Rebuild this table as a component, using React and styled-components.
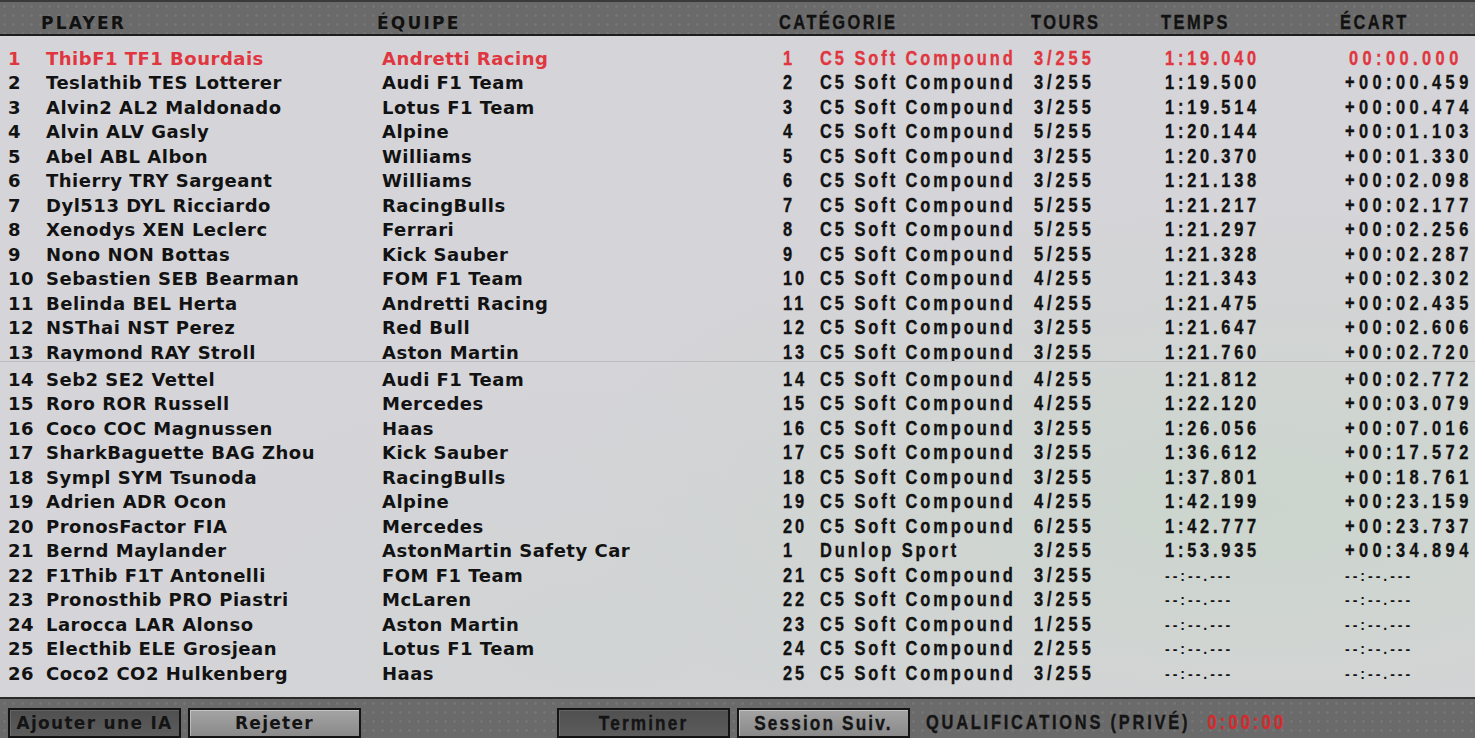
import React from "react";
import styled, { createGlobalStyle, css } from "styled-components";

const GlobalStyle = createGlobalStyle`
  html, body {
    margin: 0;
    padding: 0;
    background: #d6d5d9;
  }
  body {
    font-family: "DejaVu Sans", "Liberation Sans", sans-serif;
    overflow: hidden;
  }
`;

// wide bold face used for names and teams
const wide = css`
  font-family: "DejaVu Sans", "Liberation Sans", sans-serif;
  font-weight: 700;
  font-size: 18px;
  letter-spacing: 0.5px;
`;

// the game's narrow face: no condensed font installed, so squeeze Liberation Sans
const narrowFace = css`
  font-family: "Liberation Sans", Arial, sans-serif;
  font-weight: 700;
  font-size: 20px;
  -webkit-text-stroke: 0.35px currentColor;
  white-space: nowrap;
`;

const narrow = css`
  ${narrowFace};
  display: inline-block;
  letter-spacing: 3.6px;
  transform: scaleX(0.82);
  transform-origin: left center;
`;

const dots = css`
  background-color: #6a6a6a;
  background-image: radial-gradient(rgba(255, 255, 255, 0.07) 1px, transparent 1.6px);
  background-size: 9px 9px;
`;

const Screen = styled.div`
  width: 1475px;
  height: 738px;
  display: flex;
  flex-direction: column;
  overflow: hidden;
`;

const HeaderBar = styled.div`
  ${dots};
  height: 32px;
  border-top: 2px solid #3a3a3a;
  border-bottom: 2px solid #1e1e1e;
  padding-left: 41px;
  display: grid;
  grid-template-columns: 336px 402px 252px 130px 179px 1fr;
  align-items: center;
  color: #111;
`;

const HeadWide = styled.div`
  ${wide};
  font-size: 17px;
  letter-spacing: 2.2px;
  padding-top: 9px;
`;

const HeadNarrow = styled.div`
  padding-top: 9px;
  & > span {
    ${narrow};
    letter-spacing: 3px;
  }
`;

const Board = styled.div`
  flex: 1;
  display: flex;
  flex-direction: column;
  background:
    radial-gradient(ellipse 700px 300px at 1250px 470px, rgba(196, 214, 196, 0.55), transparent),
    radial-gradient(ellipse 500px 260px at 600px 600px, rgba(200, 212, 206, 0.35), transparent),
    #d5d4d8;
`;

const Panel = styled.div`
  overflow: hidden;
  padding-top: ${(p) => p.$top}px;
  height: ${(p) => p.$height}px;
  box-sizing: border-box;
  border-top: ${(p) => (p.$split ? "1px solid #bdbdc0" : "none")};
`;

const Row = styled.div`
  height: 24.5px;
  display: grid;
  grid-template-columns: 38px 336px 401px 37px 214px 131px 180px 1fr;
  align-items: center;
  padding-left: 8px;
  color: ${(p) => (p.$lead ? "#e0363f" : "#121212")};
  white-space: nowrap;
`;

const Wide = styled.span`
  ${wide};
`;

const Narrow = styled.span`
  ${narrow};
  letter-spacing: ${(p) => p.$ls || 3.6}px;
  margin-left: ${(p) => p.$shift || 0}px;
`;

const Dash = styled.span`
  font-family: "Liberation Sans", Arial, sans-serif;
  font-weight: 700;
  font-size: 14px;
  letter-spacing: 3px;
`;

const Footer = styled.div`
  ${dots};
  height: 41px;
  border-top: 2px solid #2a2a2a;
  display: flex;
  align-items: flex-start;
  padding: 9px 8px 0;
  box-sizing: border-box;
  gap: 7px;
`;

const Button = styled.div`
  width: 173px;
  height: 30px;
  box-sizing: border-box;
  border: 2px solid #141414;
  display: flex;
  align-items: center;
  justify-content: center;
  color: #141414;
  ${wide};
  font-size: 17px;
  letter-spacing: 1.3px;
  background: ${(p) =>
    p.$dark
      ? "linear-gradient(#4f4f4f, #5c5c5c)"
      : "linear-gradient(#a4a4a4, #8a8a8a)"};
  box-shadow: inset 1px 1px 0 rgba(255, 255, 255, ${(p) => (p.$dark ? 0.12 : 0.35)});
  & > span {
    ${narrow};
    font-size: 21px;
    letter-spacing: 2.6px;
    transform-origin: center center;
  }
`;

const Spacer = styled.div`
  width: ${(p) => p.$w}px;
`;

const Status = styled.div`
  ${narrowFace};
  display: flex;
  align-items: center;
  gap: 21px;
  margin-left: 9px;
  padding-top: 3px;
  transform: scaleX(0.82);
  transform-origin: left center;
`;

const StatusText = styled.span`
  letter-spacing: 3.4px;
  color: #141414;
`;

const Clock = styled.span`
  letter-spacing: 3.9px;
  color: #d42b2e;
`;

const rows = [
  [1, "ThibF1 TF1 Bourdais", "Andretti Racing", 1, "C5 Soft Compound", "3/255", "1:19.040", "00:00.000"],
  [2, "Teslathib TES Lotterer", "Audi F1 Team", 2, "C5 Soft Compound", "3/255", "1:19.500", "+00:00.459"],
  [3, "Alvin2 AL2 Maldonado", "Lotus F1 Team", 3, "C5 Soft Compound", "3/255", "1:19.514", "+00:00.474"],
  [4, "Alvin ALV Gasly", "Alpine", 4, "C5 Soft Compound", "5/255", "1:20.144", "+00:01.103"],
  [5, "Abel ABL Albon", "Williams", 5, "C5 Soft Compound", "3/255", "1:20.370", "+00:01.330"],
  [6, "Thierry TRY Sargeant", "Williams", 6, "C5 Soft Compound", "3/255", "1:21.138", "+00:02.098"],
  [7, "Dyl513 DYL Ricciardo", "RacingBulls", 7, "C5 Soft Compound", "5/255", "1:21.217", "+00:02.177"],
  [8, "Xenodys XEN Leclerc", "Ferrari", 8, "C5 Soft Compound", "5/255", "1:21.297", "+00:02.256"],
  [9, "Nono NON Bottas", "Kick Sauber", 9, "C5 Soft Compound", "5/255", "1:21.328", "+00:02.287"],
  [10, "Sebastien SEB Bearman", "FOM F1 Team", 10, "C5 Soft Compound", "4/255", "1:21.343", "+00:02.302"],
  [11, "Belinda BEL Herta", "Andretti Racing", 11, "C5 Soft Compound", "4/255", "1:21.475", "+00:02.435"],
  [12, "NSThai NST Perez", "Red Bull", 12, "C5 Soft Compound", "3/255", "1:21.647", "+00:02.606"],
  [13, "Raymond RAY Stroll", "Aston Martin", 13, "C5 Soft Compound", "3/255", "1:21.760", "+00:02.720"],
  [14, "Seb2 SE2 Vettel", "Audi F1 Team", 14, "C5 Soft Compound", "4/255", "1:21.812", "+00:02.772"],
  [15, "Roro ROR Russell", "Mercedes", 15, "C5 Soft Compound", "4/255", "1:22.120", "+00:03.079"],
  [16, "Coco COC Magnussen", "Haas", 16, "C5 Soft Compound", "3/255", "1:26.056", "+00:07.016"],
  [17, "SharkBaguette BAG Zhou", "Kick Sauber", 17, "C5 Soft Compound", "3/255", "1:36.612", "+00:17.572"],
  [18, "Sympl SYM Tsunoda", "RacingBulls", 18, "C5 Soft Compound", "3/255", "1:37.801", "+00:18.761"],
  [19, "Adrien ADR Ocon", "Alpine", 19, "C5 Soft Compound", "4/255", "1:42.199", "+00:23.159"],
  [20, "PronosFactor FIA", "Mercedes", 20, "C5 Soft Compound", "6/255", "1:42.777", "+00:23.737"],
  [21, "Bernd Maylander", "AstonMartin Safety Car", 1, "Dunlop Sport", "3/255", "1:53.935", "+00:34.894"],
  [22, "F1Thib F1T Antonelli", "FOM F1 Team", 21, "C5 Soft Compound", "3/255", null, null],
  [23, "Pronosthib PRO Piastri", "McLaren", 22, "C5 Soft Compound", "3/255", null, null],
  [24, "Larocca LAR Alonso", "Aston Martin", 23, "C5 Soft Compound", "1/255", null, null],
  [25, "Electhib ELE Grosjean", "Lotus F1 Team", 24, "C5 Soft Compound", "2/255", null, null],
  [26, "Coco2 CO2 Hulkenberg", "Haas", 25, "C5 Soft Compound", "3/255", null, null],
];

function ResultRow({ r }) {
  const [pos, name, team, catPos, cat, laps, time, gap] = r;
  return (
    <Row $lead={pos === 1}>
      <Wide>{pos}</Wide>
      <Wide>{name}</Wide>
      <Wide>{team}</Wide>
      <Narrow>{catPos}</Narrow>
      <Narrow>{cat}</Narrow>
      <Narrow $ls={4.8}>{laps}</Narrow>
      <div>{time ? <Narrow $ls={4.6}>{time}</Narrow> : <Dash>--:--.---</Dash>}</div>
      <div>
        {gap ? (
          <Narrow $ls={5.4} $shift={gap.startsWith("+") ? 0 : 4}>{gap}</Narrow>
        ) : (
          <Dash>--:--.---</Dash>
        )}
      </div>
    </Row>
  );
}

export default function App() {
  return (
    <>
      <GlobalStyle />
      <Screen>
        <HeaderBar>
          <HeadWide>PLAYER</HeadWide>
          <HeadWide>ÉQUIPE</HeadWide>
          <HeadNarrow><span>CATÉGORIE</span></HeadNarrow>
          <HeadNarrow><span>TOURS</span></HeadNarrow>
          <HeadNarrow><span>TEMPS</span></HeadNarrow>
          <HeadNarrow><span>ÉCART</span></HeadNarrow>
        </HeaderBar>
        <Board>
          <Panel $top={10} $height={325}>
            {rows.slice(0, 13).map((r) => (
              <ResultRow key={r[0]} r={r} />
            ))}
          </Panel>
          <Panel $top={5} $split $height={333}>
            {rows.slice(13).map((r) => (
              <ResultRow key={r[0]} r={r} />
            ))}
          </Panel>
        </Board>
        <Footer>
          <Button $dark>Ajouter une IA</Button>
          <Button>Rejeter</Button>
          <Spacer $w={182} />
          <Button $dark><span>Terminer</span></Button>
          <Button><span>Session Suiv.</span></Button>
          <Status>
            <StatusText>QUALIFICATIONS (PRIVÉ)</StatusText>
            <Clock>0:00:00</Clock>
          </Status>
        </Footer>
      </Screen>
    </>
  );
}
